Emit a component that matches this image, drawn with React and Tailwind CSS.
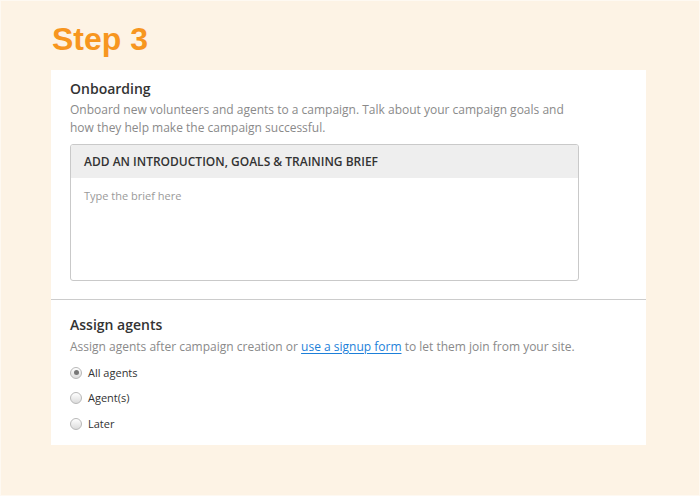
export default function App() {
  const options = [
    { label: "All agents", checked: true },
    { label: "Agent(s)", checked: false },
    { label: "Later", checked: false },
  ];

  return (
    <div className="min-h-[496px] h-[496px] bg-[#fdf3e5] border border-[#fef9f2] pl-[50px] pt-[22px] font-['Open_Sans',sans-serif]">
      <h1 className="font-['Liberation_Sans',Arial,sans-serif] font-bold text-[32px] leading-none text-[#f7961f] pl-[1px] mb-[15px]">
        Step 3
      </h1>

      <div className="w-[595px] bg-white">
        {/* Onboarding */}
        <div className="pl-[19px] pt-[9px] pb-[18px]">
          <h2 className="text-[14px] leading-[20px] font-semibold text-[#333]">Onboarding</h2>
          <p className="w-[509px] mt-[2px] text-[12px] leading-[18px] text-[#8a8a8a]">
            Onboard new volunteers and agents to a campaign. Talk about your campaign goals and how
            they help make the campaign successful.
          </p>
          <div className="w-[509px] mt-[7px] border border-[#c9c9c9] rounded-[3px] overflow-hidden">
            <div className="h-[33px] bg-[#eeeeee] flex items-center px-[13px] text-[12px] font-semibold text-[#333]">
              ADD AN INTRODUCTION, GOALS &amp; TRAINING BRIEF
            </div>
            <textarea
              className="block w-full h-[102px] resize-none outline-none px-[13px] pt-[11px] text-[11px] leading-[14px] text-[#333] placeholder:text-[#9a9a9a]"
              placeholder="Type the brief here"
            />
          </div>
        </div>

        <div className="h-px bg-[#cccccc]" />

        {/* Assign agents */}
        <div className="pl-[19px] pt-[15px] pb-[8px]">
          <h2 className="text-[14px] leading-[20px] font-semibold text-[#333]">Assign agents</h2>
          <p className="mt-[3px] text-[12px] leading-[18px] text-[#8a8a8a]">
            Assign agents after campaign creation or{" "}
            <a href="#" className="text-[#1c7fd9] underline underline-offset-2">
              use a signup form
            </a>{" "}
            to let them join from your site.
          </p>
          <div className="mt-[4px]">
            {options.map((opt) => (
              <label key={opt.label} className="h-[25.5px] flex items-center gap-[6px] text-[11px] text-[#333]">
                <span className="w-[12px] h-[12px] rounded-full border border-[#b8b8b8] bg-gradient-to-b from-white to-[#dcdcdc] flex items-center justify-center shrink-0">
                  {opt.checked && <span className="w-[5px] h-[5px] rounded-full bg-[#777]" />}
                </span>
                {opt.label}
              </label>
            ))}
          </div>
        </div>
      </div>
    </div>
  );
}
